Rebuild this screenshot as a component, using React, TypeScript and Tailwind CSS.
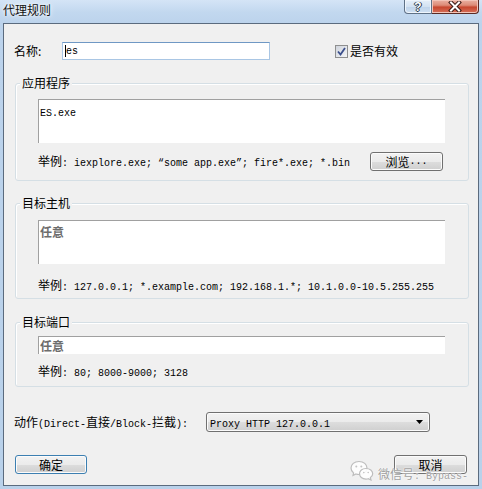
import React from "react";

const M = ({ children }: { children: React.ReactNode }) => (
  <span className="font-['Liberation_Mono',monospace] text-[10px]">{children}</span>
);

const btn =
  "flex items-center justify-center rounded-[3px] border bg-[linear-gradient(to_bottom,#f2f2f2_0%,#ebebeb_50%,#dddddd_51%,#cfcfcf_100%)] shadow-[inset_0_0_0_1px_#fbfbfb] text-[12px] leading-[16px] text-black";

function Group({ label, children, className }: { label: string; children: React.ReactNode; className: string }) {
  return (
    <div className={`relative ml-[11px] w-[454px] rounded-[3px] border border-[#d5dfe5] shadow-[inset_1px_1px_0_#ffffff] pl-[22px] ${className}`}>
      <span className="absolute left-[4px] top-[-9px] bg-[#f0f0f0] px-[2px] text-[12px] leading-[16px] text-black">
        {label}
      </span>
      {children}
    </div>
  );
}

export default function App() {
  return (
    <div className="w-[482px] h-[489px] overflow-hidden flex flex-col bg-[linear-gradient(to_bottom,#d4e4f6_0px,#c2d8ef_12px,#bcd3ec_23px,#b9d1ea_100%)] font-['Noto_Sans_CJK_SC','Noto_Sans',sans-serif] text-black">
      {/* Title bar */}
      <div className="relative h-[23px] shrink-0 flex">
        <span className="ml-[3px] mt-[2px] text-[12px] leading-[16px] text-[#111] [text-shadow:0_0_6px_#ffffff,0_0_3px_#ffffff]">
          代理规则
        </span>
        <div className="absolute right-[3px] top-0 flex">
          <div className="w-[28px] h-[14px] flex items-center justify-center rounded-bl-[4px] border border-t-0 border-[#5f7186] bg-[linear-gradient(to_bottom,#e6eff9_0%,#d3e2f2_50%,#bfd3ea_51%,#cfe0f2_100%)] shadow-[inset_0_0_0_1px_#eef5fc]">
            <span className="font-['Liberation_Sans',sans-serif] font-bold text-[12px] leading-[12px] text-white [text-shadow:0_0_1px_#2d3a4a,1px_0_0_#2d3a4a,-1px_0_0_#2d3a4a,0_1px_0_#2d3a4a]">
              ?
            </span>
          </div>
          <div className="w-[47px] h-[14px] flex items-center justify-center rounded-br-[4px] border border-l-0 border-t-0 border-[#5a2a24] bg-[linear-gradient(to_bottom,#eab0a2_0%,#dd8c78_40%,#c7472f_55%,#d6705a_100%)] shadow-[inset_0_0_0_1px_#f2c4b8]">
            <svg width="14" height="11" viewBox="0 0 14 11">
              <path d="M3 1.5 L11 9.5 M11 1.5 L3 9.5" stroke="#3a1a16" strokeWidth="4" strokeLinecap="square" />
              <path d="M3 1.5 L11 9.5 M11 1.5 L3 9.5" stroke="#ffffff" strokeWidth="2" strokeLinecap="square" />
            </svg>
          </div>
        </div>
      </div>

      {/* Client area */}
      <div className="relative mx-[3px] h-[463px] shrink-0 border border-[#5b6b7e] bg-[#f0f0f0] flex flex-col">
        {/* Name row */}
        <div className="mt-[18px] h-[18px] flex items-center pl-[10px]">
          <span className="w-[48px] text-[12px] leading-[16px]">名称:</span>
          <div className="w-[208px] h-[18px] bg-white border border-[#a9c6e4] border-t-[#6f98c4] flex items-center pl-[2px]">
            <span className="w-px h-[12px] bg-black"></span>
            <M>es</M>
          </div>
          <div className="ml-[65px] flex items-center gap-[2px]">
            <div className="w-[13px] h-[13px] border border-[#8e8f8f] bg-[linear-gradient(to_bottom_right,#cfd4dc,#f4f5f7)] flex items-center justify-center">
              <svg width="9" height="9" viewBox="0 0 9 9">
                <path d="M1 4.5 L3.5 7.5 L8 1" fill="none" stroke="#3b4f8c" strokeWidth="1.8" />
              </svg>
            </div>
            <span className="text-[12px] leading-[16px]">是否有效</span>
          </div>
        </div>

        {/* Group 1 */}
        <Group label="应用程序" className="mt-[23px] pt-[15px] pb-[9px]">
          <div className="w-[407px] h-[44px] bg-white border-t border-l border-[#a0a0a0] pl-[1px] pt-[2px] leading-[14px]">
            <M>ES.exe</M>
          </div>
          <div className="mt-[9px] h-[19px] flex items-center">
            <div className="w-[332px] leading-[16px] whitespace-pre">
              <span className="text-[12px]">举例</span>
              <M>: iexplore.exe; “some app.exe”; fire*.exe; *.bin</M>
            </div>
            <div className={`${btn} w-[73px] h-[19px] border-[#707070]`}>
              <span>浏览</span>
              <M>...</M>
            </div>
          </div>
        </Group>

        {/* Group 2 */}
        <Group label="目标主机" className="mt-[22px] pt-[16px] pb-[7px]">
          <div className="w-[407px] h-[44px] bg-white border-t border-l border-[#a0a0a0] pl-[1px] pt-[1px] leading-[16px]">
            <span className="text-[12px] font-bold text-[#6d6d6d]">任意</span>
          </div>
          <div className="mt-[11px] h-[16px] leading-[16px] whitespace-pre">
            <span className="text-[12px]">举例</span>
            <M>: 127.0.0.1; *.example.com; 192.168.1.*; 10.1.0.0-10.5.255.255</M>
          </div>
        </Group>

        {/* Group 3 */}
        <Group label="目标端口" className="mt-[23px] pt-[13px] pb-[9px]">
          <div className="w-[407px] h-[18px] bg-white border-t border-l border-[#a0a0a0] pl-[1px] flex items-center">
            <span className="text-[12px] leading-[16px] font-bold text-[#6d6d6d]">任意</span>
          </div>
          <div className="mt-[7px] h-[16px] leading-[16px] whitespace-pre">
            <span className="text-[12px]">举例</span>
            <M>: 80; 8000-9000; 3128</M>
          </div>
        </Group>

        {/* Action row */}
        <div className="mt-[25px] h-[20px] flex items-center pl-[10px]">
          <div className="w-[192px] leading-[16px] whitespace-pre">
            <span className="text-[12px]">动作</span>
            <M>(Direct-</M>
            <span className="text-[12px]">直接</span>
            <M>/Block-</M>
            <span className="text-[12px]">拦截</span>
            <M>):</M>
          </div>
          <div className="w-[224px] h-[20px] rounded-[3px] border border-[#707070] bg-[linear-gradient(to_bottom,#f2f2f2_0%,#ebebeb_50%,#dddddd_51%,#cfcfcf_100%)] shadow-[inset_0_0_0_1px_#fbfbfb] flex items-center pl-[3px] pr-[6px]">
            <span className="flex-1 leading-[16px]">
              <M>Proxy HTTP 127.0.0.1</M>
            </span>
            <svg width="7" height="4" viewBox="0 0 7 4">
              <path d="M0 0 L7 0 L3.5 4 Z" fill="#000" />
            </svg>
          </div>
        </div>

        {/* Buttons row */}
        <div className="mt-[23px] h-[19px] flex items-center pl-[11px]">
          <div className={`${btn} w-[72px] h-[19px] border-[#3c7fb1] shadow-[inset_0_0_0_1px_#48c6f5]`}>确定</div>
          <div className={`${btn} ml-[307px] w-[73px] h-[19px] border-[#707070]`}>取消</div>
        </div>

        {/* Watermark overlay */}
        <div className="absolute left-[346px] top-[432px] flex items-center gap-[4px] pointer-events-none">
          <svg width="24" height="21" viewBox="0 0 24 21">
            <path d="M9 1.5 C4.3 1.5 1 4.4 1 8 C1 10 2 11.7 3.6 12.9 L3 15.5 L6 14 C7 14.3 8 14.5 9 14.5 C13.7 14.5 17 11.6 17 8 C17 4.4 13.7 1.5 9 1.5 Z" fill="#ffffff" fillOpacity="0.85" stroke="#bdbdbd" strokeWidth="1.2" />
            <path d="M16 8.5 C12.1 8.5 9.5 10.9 9.5 13.8 C9.5 16.7 12.1 19.1 16 19.1 C16.8 19.1 17.6 19 18.3 18.7 L21 20 L20.4 17.6 C21.9 16.6 22.7 15.3 22.7 13.8 C22.7 10.9 19.9 8.5 16 8.5 Z" fill="#ffffff" fillOpacity="0.9" stroke="#bdbdbd" strokeWidth="1.2" />
            <circle cx="6.3" cy="6.5" r="1" fill="#c4c4c4" />
            <circle cx="11.3" cy="6.5" r="1" fill="#c4c4c4" />
            <circle cx="13.8" cy="12.5" r="0.8" fill="#c4c4c4" />
            <circle cx="18.2" cy="12.5" r="0.8" fill="#c4c4c4" />
          </svg>
          <span className="leading-[16px] mt-[8px] text-[#a0a0a0] [text-shadow:0_0_2px_#ffffff,0_0_1px_#ffffff] whitespace-pre">
            <span className="text-[12px]">微信号</span>
            <M>: Bypass-</M>
          </span>
        </div>
      </div>
    </div>
  );
}
